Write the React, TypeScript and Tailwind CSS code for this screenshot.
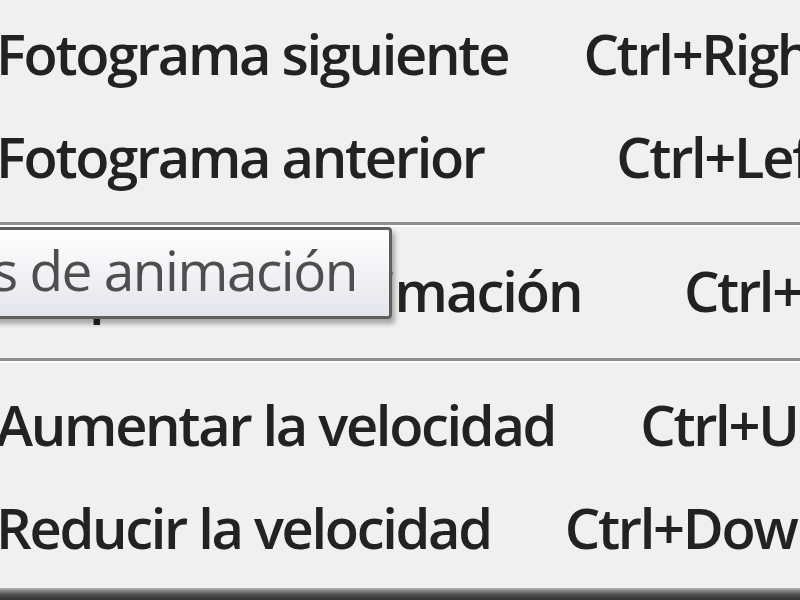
import React from 'react';

type Item = { label: string; shortcut: string; indent?: boolean };

const groups: Item[][] = [
  [
    { label: 'Fotograma siguiente', shortcut: 'Ctrl+Right' },
    { label: 'Fotograma anterior', shortcut: 'Ctrl+Left' },
  ],
  [{ label: 'Reproducir animación', shortcut: 'Ctrl+L', indent: true }],
  [
    { label: 'Aumentar la velocidad', shortcut: 'Ctrl+Up' },
    { label: 'Reducir la velocidad', shortcut: 'Ctrl+Down' },
  ],
];

const MenuRow = ({ item }: { item: Item }) => (
  <div className="flex h-[103px] items-center whitespace-nowrap">
    <span className={item.indent ? 'ml-[25px] tracking-[-2px]' : '-ml-[4px]'}>{item.label}</span>
    <span className="ml-auto shrink-0 pl-[20px] tracking-[-2.3px]">{item.shortcut}</span>
  </div>
);

const Separator = () => (
  <div className="my-[1px]">
    <div className="h-[3px] bg-[#8e8e8e]" />
    <div className="h-[2px] bg-white" />
  </div>
);

export default function App() {
  return (
    <div className="relative h-[600px] w-[800px] overflow-hidden bg-[#f0f0f0] font-['Open_Sans',sans-serif] text-[56px] font-semibold text-[#222] tracking-[-2.3px]">
      <div className="w-[830px] pt-[1px]">
        <div className="pb-[14px]">
          {groups[0].map((item) => (
            <MenuRow key={item.label} item={item} />
          ))}
        </div>
        <Separator />
        <div className="pb-[16px] pt-[10px]">
          {groups[1].map((item) => (
            <MenuRow key={item.label} item={item} />
          ))}
        </div>
        <Separator />
        <div className="pt-[8px]">
          {groups[2].map((item) => (
            <MenuRow key={item.label} item={item} />
          ))}
        </div>
      </div>

      {/* tooltip over the third item */}
      <div className="absolute left-[-400px] top-[227px] flex h-[92px] w-[792px] items-center justify-end rounded-[4px] border-[3px] border-[#5e5e5e] bg-gradient-to-b from-white to-[#e4e5ec] pb-[6px] pr-[32px] text-[55px] font-medium tracking-[-1.5px] text-[#4e4e4e] shadow-[3px_5px_5px_rgba(0,0,0,0.3)] whitespace-nowrap">
        Propiedades de animación
      </div>

      {/* menu bottom border */}
      <div className="absolute bottom-0 left-0 h-[12px] w-full bg-gradient-to-b from-[#b4b4b4] via-[#555] to-[#333]" />
    </div>
  );
}
